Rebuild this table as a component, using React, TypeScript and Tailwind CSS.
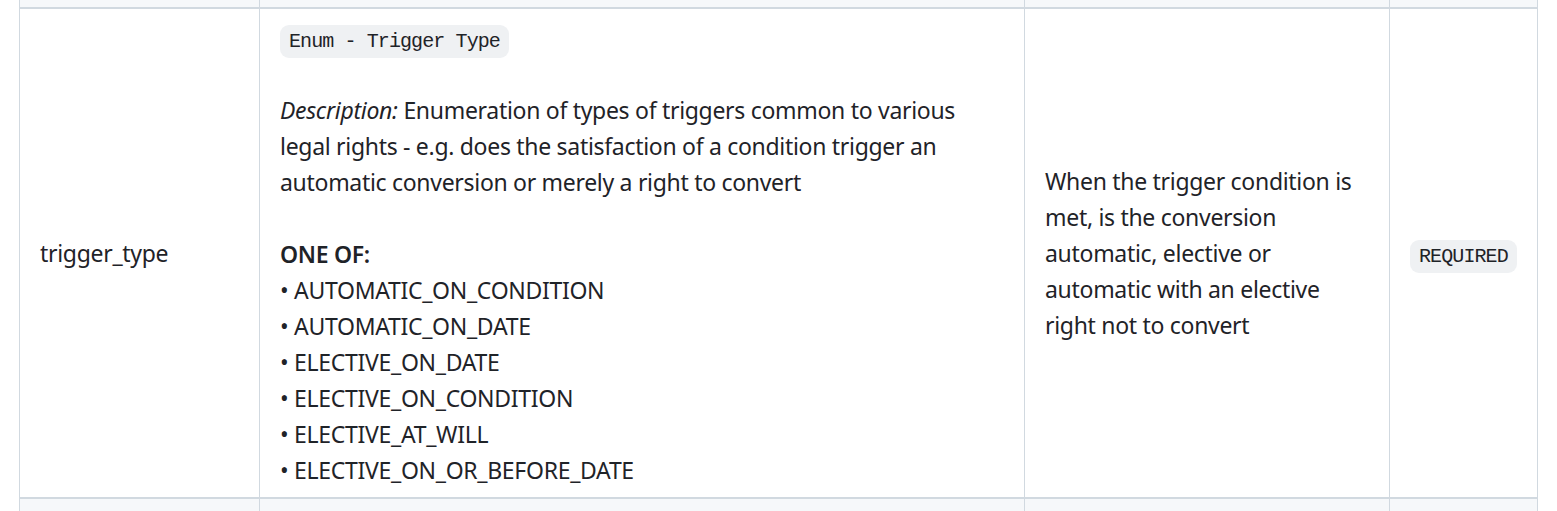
const options = [
  "AUTOMATIC_ON_CONDITION",
  "AUTOMATIC_ON_DATE",
  "ELECTIVE_ON_DATE",
  "ELECTIVE_ON_CONDITION",
  "ELECTIVE_AT_WILL",
  "ELECTIVE_ON_OR_BEFORE_DATE",
];

const cell = "border-x border-[#d1d9e0] px-[20px] py-[9px] align-middle";
const code =
  "rounded-[9px] bg-[#eff1f3] px-[9px] py-[5px] font-['Liberation_Mono',monospace] text-[20px] leading-none tracking-[-0.9px]";

export default function App() {
  return (
    <div className="min-h-[511px] bg-white pl-[19px] pr-[20px] font-['Noto_Sans',sans-serif] text-[23px] leading-[36px] tracking-[-0.3px] text-[#1f2328]">
      <table className="w-[1518px] table-fixed border-collapse">
        <colgroup>
          <col className="w-[240px]" />
          <col className="w-[765px]" />
          <col className="w-[365px]" />
          <col className="w-[148px]" />
        </colgroup>
        <tbody>
          <tr className="h-[8px] bg-[#f6f8fa]">
            <td className="border-x border-[#d1d9e0]" />
            <td className="border-x border-[#d1d9e0]" />
            <td className="border-x border-[#d1d9e0]" />
            <td className="border-x border-[#d1d9e0]" />
          </tr>
          <tr className="border-y-2 border-[#d1d9e0] bg-white">
            <td className={cell}>trigger_type</td>
            <td className={`${cell} pt-[11px]`}>
              <code className={code}>Enum - Trigger Type</code>
              <br />
              <br />
              <em>Description:</em> Enumeration of types of triggers common to
              various
              <br />
              legal rights - e.g. does the satisfaction of a condition trigger
              an
              <br />
              automatic conversion or merely a right to convert
              <br />
              <br />
              <strong className="font-semibold">ONE OF:</strong>
              {options.map((o) => (
                <div key={o}>• {o}</div>
              ))}
            </td>
            <td className={cell}>
              When the trigger condition is met, is the conversion automatic,
              elective or automatic with an elective right not to convert
            </td>
            <td className={cell}>
              <code className={code}>REQUIRED</code>
            </td>
          </tr>
          <tr className="h-[16px] bg-[#f6f8fa]">
            <td className="border-x border-[#d1d9e0]" />
            <td className="border-x border-[#d1d9e0]" />
            <td className="border-x border-[#d1d9e0]" />
            <td className="border-x border-[#d1d9e0]" />
          </tr>
        </tbody>
      </table>
    </div>
  );
}
